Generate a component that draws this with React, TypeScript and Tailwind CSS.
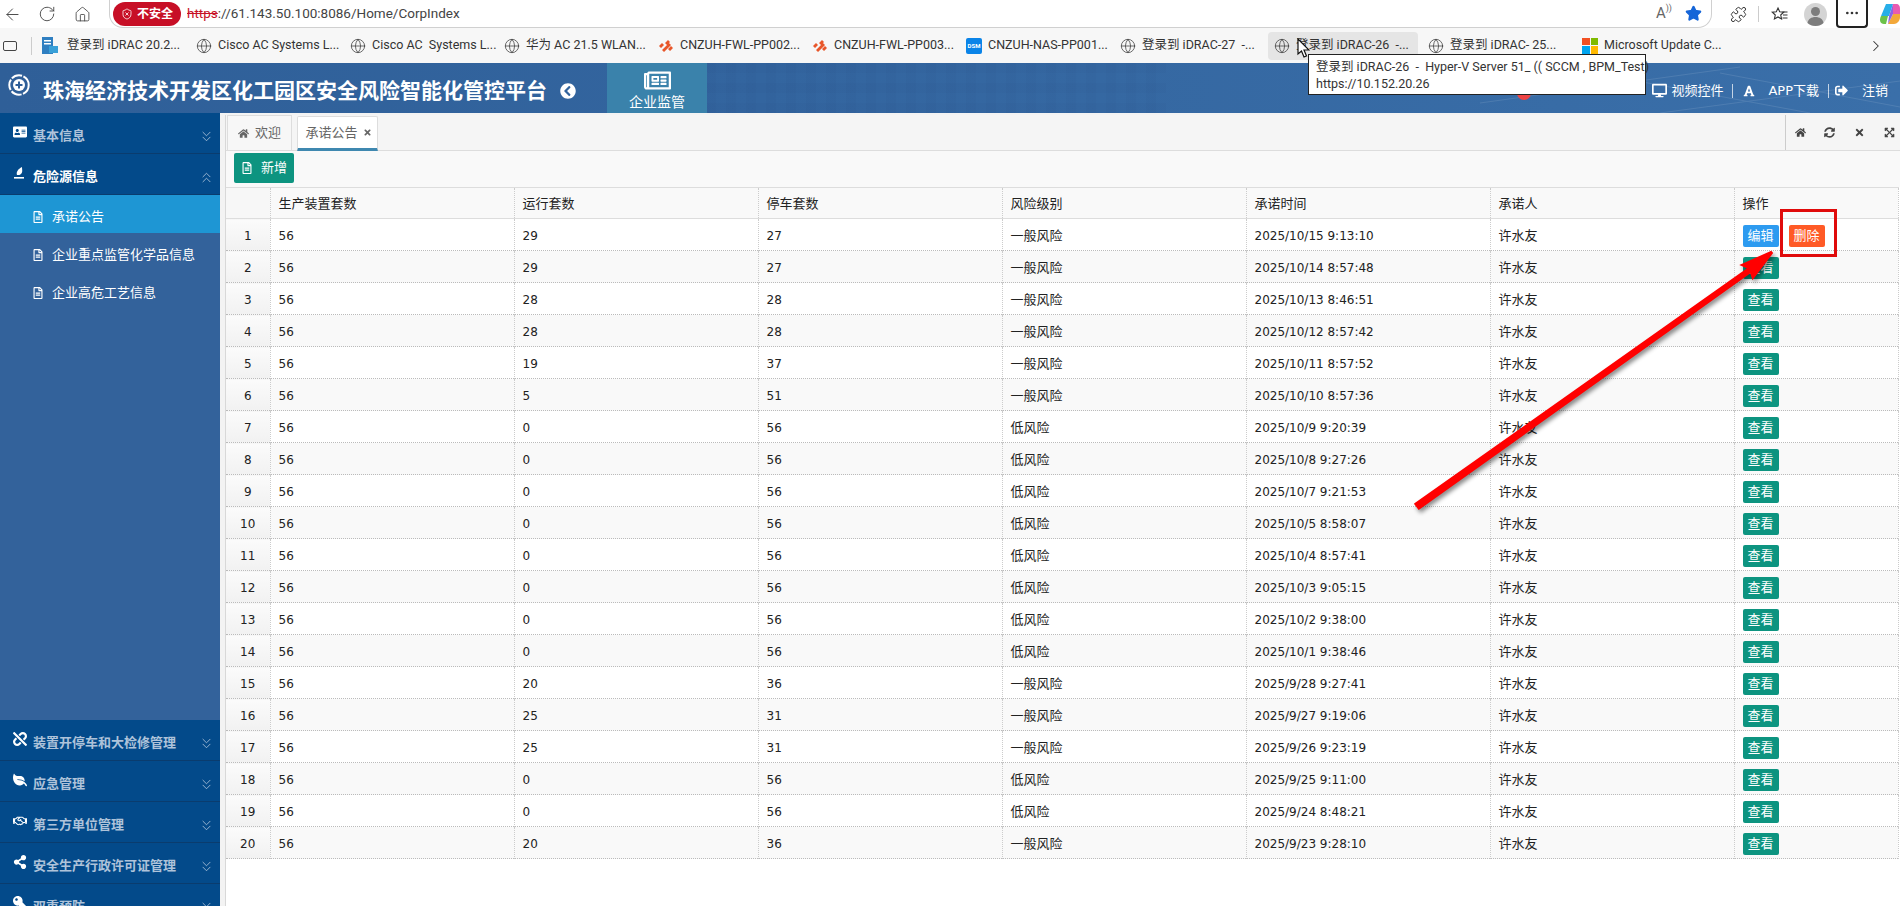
import { ArrowLeft, RotateCw, Home, Globe, ChevronRight, ChevronsDown, ChevronsUp, Ellipsis, Star, Puzzle, ShieldX } from 'lucide-react'
import {
  FaAddressCard, FaRegFileAlt, FaLeaf, FaRegHandshake, FaShareAlt, FaKey, FaUnlink,
  FaHome, FaTimes, FaSyncAlt, FaExpandArrowsAlt, FaChevronCircleLeft, FaRegNewspaper, FaDesktop, FaFont, FaSignOutAlt,
} from 'react-icons/fa'

const font = "font-['DejaVu_Sans','Noto_Sans_CJK_SC',sans-serif]"
const chromeFont = "font-['Roboto','Noto_Sans_CJK_SC',sans-serif]"

const rows = [
  ['29', '27', '一般风险', '2025/10/15 9:13:10'],
  ['29', '27', '一般风险', '2025/10/14 8:57:48'],
  ['28', '28', '一般风险', '2025/10/13 8:46:51'],
  ['28', '28', '一般风险', '2025/10/12 8:57:42'],
  ['19', '37', '一般风险', '2025/10/11 8:57:52'],
  ['5', '51', '一般风险', '2025/10/10 8:57:36'],
  ['0', '56', '低风险', '2025/10/9 9:20:39'],
  ['0', '56', '低风险', '2025/10/8 9:27:26'],
  ['0', '56', '低风险', '2025/10/7 9:21:53'],
  ['0', '56', '低风险', '2025/10/5 8:58:07'],
  ['0', '56', '低风险', '2025/10/4 8:57:41'],
  ['0', '56', '低风险', '2025/10/3 9:05:15'],
  ['0', '56', '低风险', '2025/10/2 9:38:00'],
  ['0', '56', '低风险', '2025/10/1 9:38:46'],
  ['20', '36', '一般风险', '2025/9/28 9:27:41'],
  ['25', '31', '一般风险', '2025/9/27 9:19:06'],
  ['25', '31', '一般风险', '2025/9/26 9:23:19'],
  ['0', '56', '低风险', '2025/9/25 9:11:00'],
  ['0', '56', '低风险', '2025/9/24 8:48:21'],
  ['20', '36', '一般风险', '2025/9/23 9:28:10'],
]

const bookmarks = [
  { label: '登录到 iDRAC 20.2...', icon: 'server' },
  { label: 'Cisco AC Systems L...', icon: 'globe' },
  { label: 'Cisco AC  Systems L...', icon: 'globe' },
  { label: '华为 AC 21.5 WLAN...', icon: 'globe' },
  { label: 'CNZUH-FWL-PP002...', icon: 'palo' },
  { label: 'CNZUH-FWL-PP003...', icon: 'palo' },
  { label: 'CNZUH-NAS-PP001...', icon: 'dsm' },
  { label: '登录到 iDRAC-27  -...', icon: 'globe' },
  { label: '登录到 iDRAC-26  -...', icon: 'globe', hover: true },
  { label: '登录到 iDRAC- 25...', icon: 'globe' },
  { label: 'Microsoft Update C...', icon: 'ms' },
]

function BookmarkIcon ({ kind }: { kind: string }) {
  if (kind === 'globe') return <Globe size={16} strokeWidth={1.2} className="text-[#444] shrink-0" />
  if (kind === 'server') {
    return (
      <svg width="19" height="18" viewBox="0 0 19 18" className="shrink-0">
        <rect x="0" y="0" width="11" height="17" fill="#2f7fc1" />
        <rect x="2" y="3" width="7" height="1.5" fill="#fff" />
        <rect x="2" y="6" width="7" height="1.5" fill="#fff" />
        <rect x="7" y="9" width="9" height="7" fill="#39a0d8" />
      </svg>
    )
  }
  if (kind === 'palo') {
    return (
      <svg width="16" height="16" viewBox="0 0 16 16" className="shrink-0">
        <path d="M1 8l3-3 2 2-3 3zM4 12l7-7 2 2-7 7zM7 5l3-3 2 2-3 3zM10 11l3-3 2 2-3 3z" fill="#e8562a" />
      </svg>
    )
  }
  if (kind === 'dsm') {
    return (
      <div className="w-4 h-4 rounded-[2px] bg-[#0a84e8] text-white text-[6px] font-bold flex items-center justify-center shrink-0">DSM</div>
    )
  }
  return (
    <div className="w-4 h-4 grid grid-cols-2 gap-px shrink-0">
      <div className="bg-[#f25022]" />
      <div className="bg-[#7fba00]" />
      <div className="bg-[#00a4ef]" />
      <div className="bg-[#ffb900]" />
    </div>
  )
}

function BrowserBar () {
  return (
    <div className={`${chromeFont} h-[63px] shrink-0 bg-[#f7f7f7]`}>
      <div className="h-7 bg-white flex items-center relative">
        <div className="w-[109px] flex items-center shrink-0 text-[#444]">
          <ArrowLeft size={19} strokeWidth={1.2} className="ml-[3px]" />
          <RotateCw size={18} strokeWidth={1.2} className="ml-[16px]" />
          <Home size={17} strokeWidth={1.2} className="ml-[18px]" />
        </div>
        <div className="w-[1605px] h-7 border-b border-r border-l border-[#d0d0d0] rounded-br-[14px] rounded-bl-[14px] flex items-center pl-[3px] pr-[9px]">
          <div className="h-6 w-[68px] rounded-full bg-[#c70f26] text-white text-[12px] font-semibold flex items-center justify-center gap-[4px]">
            <ShieldX size={12} strokeWidth={1.6} />
            不安全
          </div>
          <div className="ml-[6px] text-[13.5px] text-[#444] whitespace-nowrap">
            <span className="text-[#c70f26] line-through">https</span>://61.143.50.100:8086/Home/CorpIndex
          </div>
          <div className="ml-auto flex items-center gap-[13px] text-[#666]">
            <span className="text-[15px]">A<span className="text-[9px] align-top">))</span></span>
            <Star size={17} className="text-[#1565d8] fill-[#1565d8]" />
          </div>
        </div>
        <div className="flex-1 flex items-center text-[#333]">
          <Puzzle size={17} strokeWidth={1.4} className="ml-[18px]" />
          <div className="w-px h-4 bg-[#ccc] ml-[11px]" />
          <svg width="17" height="17" viewBox="0 0 17 17" className="ml-[12px]" fill="none" stroke="#333" strokeWidth="1.1">
            <path d="M7 2l1.7 3.8 4 .4-3 2.8.9 4L7 11l-3.6 2 .9-4-3-2.8 4-.4z" />
            <path d="M11.5 6h5M12 9h4.5M11.5 12h5" />
          </svg>
          <svg width="23" height="23" viewBox="0 0 23 23" className="ml-[16px]">
            <circle cx="11.5" cy="11.5" r="11.5" fill="#d4d4d4" />
            <circle cx="11.5" cy="8.5" r="4.5" fill="#7d7d7d" />
            <path d="M3.5 20c.5-4 4-6 8-6s7.5 2 8 6c-2 2-5 3-8 3s-6-1-8-3z" fill="#7d7d7d" />
          </svg>
          <div className="w-[32px] h-7 border-2 border-t-0 border-[#222] rounded-b-[4px] ml-[9px] flex items-center justify-center">
            <Ellipsis size={16} />
          </div>
          <svg width="21" height="22" viewBox="0 0 21 22" className="ml-[11px] shrink-0">
            <path d="M7 1h7l-4 12H2z" fill="#27aee8" />
            <path d="M14 1h3c3 0 4 2 4 5v5h-7z" fill="#e85bb0" />
            <path d="M2 13h7l-2 8H5c-4 0-5-4-3-8z" fill="#6cc24a" />
            <path d="M14 11h7v3c0 4-3 7-6 7H9z" fill="#f3a83a" />
            <path d="M10 13l4-12 0 10-5 10z" fill="#8a63e6" />
          </svg>
        </div>
      </div>
      <div className="h-[35px] flex items-center text-[#333] relative">
        <div className="w-[36px] flex items-center shrink-0">
          <div className="ml-[3px] w-[14px] h-[10px] border-[1.5px] border-[#444] rounded-[2px]" />
          <div className="ml-[14px] w-px h-[18px] bg-[#ccc]" />
        </div>
        {bookmarks.map(b => (
          <div key={b.label} className={`w-[154px] shrink-0 flex items-center gap-[6px] h-7 pl-[6px] rounded-[4px] whitespace-nowrap ${b.hover ? 'bg-[#e5e5e5] mr-[4px] !w-[150px]' : ''}`}>
            <BookmarkIcon kind={b.icon} />
            <span className="text-[12.5px] whitespace-pre">{b.label}</span>
          </div>
        ))}
        <ChevronRight size={18} strokeWidth={1.4} className="absolute left-[1867px] top-[9px]" />
      </div>
    </div>
  )
}

function SideMain ({ icon, label, open, active }: { icon: React.ReactNode; label: string; open?: boolean; active?: boolean }) {
  return (
    <div className={`h-[41px] shrink-0 bg-[#034a8a] border-b border-[#0a3c6e] flex items-center pl-[13px] pr-[5px] text-[13px] font-bold ${active ? 'text-white' : 'text-[#aec3da]'}`}>
      <span className="w-[20px] text-white text-[14px] -mt-[2px]">{icon}</span>
      <span className="pt-[6px]">{label}</span>
      <span className="ml-auto pt-[6px] text-[#aec3da]">{open ? <ChevronsUp size={17} strokeWidth={1.2} /> : <ChevronsDown size={17} strokeWidth={1.2} />}</span>
    </div>
  )
}

function SideSub ({ label, active }: { label: string; active?: boolean }) {
  return (
    <div className={`h-[38px] shrink-0 flex items-center pl-[32px] pt-[5px] text-[13px] text-white ${active ? 'bg-[#1e96d4]' : ''}`}>
      <FaRegFileAlt className="text-[12px] mr-[8px]" />
      {label}
    </div>
  )
}

function SpillIcon () {
  return (
    <svg width="12" height="14" viewBox="0 0 12 14" fill="#fff">
      <path d="M4 9c-1-3 1-6 5-8 0 3 1 5-1 7-1 1-2 1-4 1z" />
      <rect x="1" y="11" width="10" height="1.6" />
    </svg>
  )
}

function Sidebar () {
  return (
    <div className={`${font} w-[220px] shrink-0 bg-[#33629b] flex flex-col overflow-hidden`}>
      <SideMain icon={<FaAddressCard />} label="基本信息" />
      <SideMain icon={<SpillIcon />} label="危险源信息" open active />
      <SideSub label="承诺公告" active />
      <SideSub label="企业重点监管化学品信息" />
      <SideSub label="企业高危工艺信息" />
      <div className="flex-1 min-h-0" />
      <SideMain icon={<FaUnlink />} label="装置开停车和大检修管理" />
      <SideMain icon={<FaLeaf className="-scale-x-100" />} label="应急管理" />
      <SideMain icon={<FaRegHandshake />} label="第三方单位管理" />
      <SideMain icon={<FaShareAlt />} label="安全生产行政许可证管理" />
      <div className="h-[22px] shrink-0 overflow-hidden">
        <SideMain icon={<FaKey className="-scale-x-100" />} label="双重预防" />
      </div>
    </div>
  )
}

function Header () {
  return (
    <div className={`${font} h-[50px] shrink-0 bg-[linear-gradient(90deg,#2f5f98,#33659f_40%,#3a6fa9)] flex items-center text-white relative`}>
      <div className="absolute left-[706px] top-0 w-[460px] h-full bg-[repeating-linear-gradient(90deg,rgba(0,0,50,0.02)_0_10px,transparent_10px_20px),repeating-linear-gradient(0deg,rgba(0,0,50,0.02)_0_10px,transparent_10px_20px)]" />
      <svg className="absolute right-0 top-0 opacity-10" width="420" height="50" viewBox="0 0 420 50" fill="none" stroke="#fff">
        <path d="M0 40L260 4M60 0L330 50M180 50L420 18M240 10L420 44" />
      </svg>
      <svg width="22" height="22" viewBox="0 0 22 22" className="ml-[8px] -mt-[6px] shrink-0" fill="none" stroke="#fff">
        <circle cx="11" cy="11" r="9.7" strokeWidth="2" strokeDasharray="11 1.5" />
        <circle cx="11" cy="11" r="6" fill="#fff" stroke="none" />
        <path d="M11 7.5v7M7.5 11h7" stroke="#2f5f98" strokeWidth="2" />
      </svg>
      <div className="ml-[13px] mt-[4px] text-[21px] font-bold whitespace-nowrap font-['Noto_Sans_CJK_SC',sans-serif]">珠海经济技术开发区化工园区安全风险智能化管控平台</div>
      <FaChevronCircleLeft className="ml-[13px] mt-[5px] text-[16px] shrink-0" />
      <div className="ml-[31px] w-[100px] h-full bg-[#3a82ab] flex flex-col items-center justify-center relative">
        <FaRegNewspaper className="text-[27px] mb-[1px]" />
        <span className="text-[14px] leading-[15px]">企业监管</span>
      </div>
      <div className="ml-auto mr-[12px] mt-[5px] flex items-center text-[13px] relative">
        <FaDesktop className="text-[15px] mr-[4px]" />
        <span>视频控件</span>
        <div className="w-px h-[14px] bg-white/70 mx-[9px]" />
        <FaFont className="text-[12px] ml-[1px] mr-[13px]" />
        <span>APP下载</span>
        <div className="w-px h-[14px] bg-white/70 ml-[9px] mr-[6px]" />
        <FaSignOutAlt className="text-[13px] mr-[14px]" />
        <span>注销</span>
      </div>
    </div>
  )
}

function Tabs () {
  return (
    <div className="h-[36px] shrink-0 bg-[#f5f5f5] border-b border-[#ddd] flex items-end pl-[1px] text-[13px] text-[#666]">
      <div className="w-[65px] h-[35px] border border-b-0 border-[#ddd] flex items-center justify-center gap-[6px] bg-[#f7f7f7]">
        <FaHome className="text-[11px]" />
        <span>欢迎</span>
      </div>
      <div className="ml-[5px] w-[81px] h-[35px] border border-[#ddd] border-b-[3px] border-b-[#3f88b0] bg-white flex items-center justify-center gap-[5px] rounded-t-[2px] -mb-px pl-[2px]">
        <span>承诺公告</span>
        <FaTimes className="text-[9px]" />
      </div>
      <div className="ml-auto flex h-[35px] w-[115px] overflow-hidden text-[#444] text-[11px] border-l border-[#ccc]">
        <div className="w-[28px] shrink-0 flex items-center justify-center"><FaHome /></div>
        <div className="w-[30px] shrink-0 flex items-center justify-center"><FaSyncAlt /></div>
        <div className="w-[30px] shrink-0 flex items-center justify-center"><FaTimes /></div>
        <div className="w-[30px] shrink-0 flex items-center justify-center"><FaExpandArrowsAlt /></div>
      </div>
    </div>
  )
}

const th = 'border-l border-dotted border-[#ccc] text-left font-normal pl-[8px] pt-[2px] text-[13px] text-[#222]'
const td = 'border-l border-dotted border-[#ccc] pl-[8px] pt-[2px] text-[#222]'

function Table () {
  return (
    <table className="table-fixed border-collapse w-[1672px] text-[12px]">
      <colgroup>
        <col className="w-[44px]" />
        <col className="w-[244px]" />
        <col className="w-[244px]" />
        <col className="w-[244px]" />
        <col className="w-[244px]" />
        <col className="w-[244px]" />
        <col className="w-[244px]" />
        <col className="w-[164px]" />
      </colgroup>
      <thead>
        <tr className="h-[31px] bg-[#f9f9f9] border-t border-b border-[#ddd]">
          <th className="bg-[#f7f7f7]" />
          <th className={th}>生产装置套数</th>
          <th className={th}>运行套数</th>
          <th className={th}>停车套数</th>
          <th className={th}>风险级别</th>
          <th className={th}>承诺时间</th>
          <th className={th}>承诺人</th>
          <th className={`${th} border-r`}>操作</th>
        </tr>
      </thead>
      <tbody>
        {rows.map((r, i) => (
          <tr key={i} className={`h-[32px] border-b border-dotted border-[#bbb] ${i % 2 ? 'bg-[#f9f9f9]' : 'bg-white'}`}>
            <td className="text-center pt-[2px] bg-[linear-gradient(#fbfbfb,#f1f1f1)] text-[#222]">{i + 1}</td>
            <td className={td}>56</td>
            <td className={td}>{r[0]}</td>
            <td className={td}>{r[1]}</td>
            <td className={`${td} text-[13px]`}>{r[2]}</td>
            <td className={td}>{r[3]}</td>
            <td className={`${td} text-[13px]`}>许水友</td>
            <td className={`${td} border-r`}>
              {i === 0 ? (
                <div className="flex gap-[10px]">
                  <button type="button" className="w-9 h-[22px] rounded-[2px] bg-[#2d9bf0] text-white text-[13px]">编辑</button>
                  <button type="button" className="w-9 h-[22px] rounded-[2px] bg-[#ff5a26] text-white text-[13px]">删除</button>
                </div>
              ) : (
                <button type="button" className="w-9 h-[22px] rounded-[2px] bg-[#0d9480] text-white text-[13px] block">查看</button>
              )}
            </td>
          </tr>
        ))}
      </tbody>
    </table>
  )
}

function Annotations () {
  return (
    <>
      <svg className="absolute left-[1400px] top-[230px] pointer-events-none drop-shadow-[2px_3px_2px_rgba(0,0,0,0.45)]" width="400" height="290" viewBox="0 0 400 290" fill="none">
        <path d="M16 274 L350 38 L343 35 L372 22 L353 47 L351 41 L19 278 Z" fill="#f00" stroke="#f00" strokeWidth="3" />
      </svg>
      <div className="absolute left-[1780px] top-[209px] w-[57px] h-[48px] border-[3px] border-[#e00b0b]" />
      <div className="absolute left-[1517px] top-[86px] w-[14px] h-[14px] rounded-full bg-[#ee4444]" />
      <div className={`${chromeFont} absolute left-[1308px] top-[54px] w-[338px] h-[41px] bg-white border border-[#222] text-[12.5px] leading-[17px] text-[#333] px-[7px] py-[3px]`}>
        <div className="whitespace-pre">登录到 iDRAC-26  -  Hyper-V Server 51_ (( SCCM , BPM_Test)</div>
        <div>https://10.152.20.26</div>
      </div>
      <svg className="absolute left-[1297px] top-[38px]" width="13" height="20" viewBox="0 0 13 20">
        <path d="M1 1 L1 16 L4.5 13 L7 19 L9.5 18 L7 12 L12 12 Z" fill="#fff" stroke="#111" strokeWidth="1.2" />
      </svg>
    </>
  )
}

export default function App () {
  return (
    <div className="relative w-[1900px] h-[906px] overflow-hidden bg-white flex flex-col">
      <BrowserBar />
      <Header />
      <div className="flex flex-1 min-h-0">
        <Sidebar />
        <div className={`${font} flex-1 min-w-0 pl-[5px] bg-[#f3f3f3]`}>
          <div className="h-[2px]" />
          <div className="h-full border-l border-[#d8d8d8] bg-white">
            <Tabs />
            <div className="h-[36px] bg-[#f9f9f9] pl-[8px] pt-[2px]">
              <button type="button" className="w-[60px] h-[30px] rounded-[2px] bg-[#0d9480] text-white text-[13px] flex items-center justify-center gap-[8px]">
                <FaRegFileAlt className="text-[12px]" />
                新增
              </button>
            </div>
            <Table />
          </div>
        </div>
      </div>
      <Annotations />
    </div>
  )
}
